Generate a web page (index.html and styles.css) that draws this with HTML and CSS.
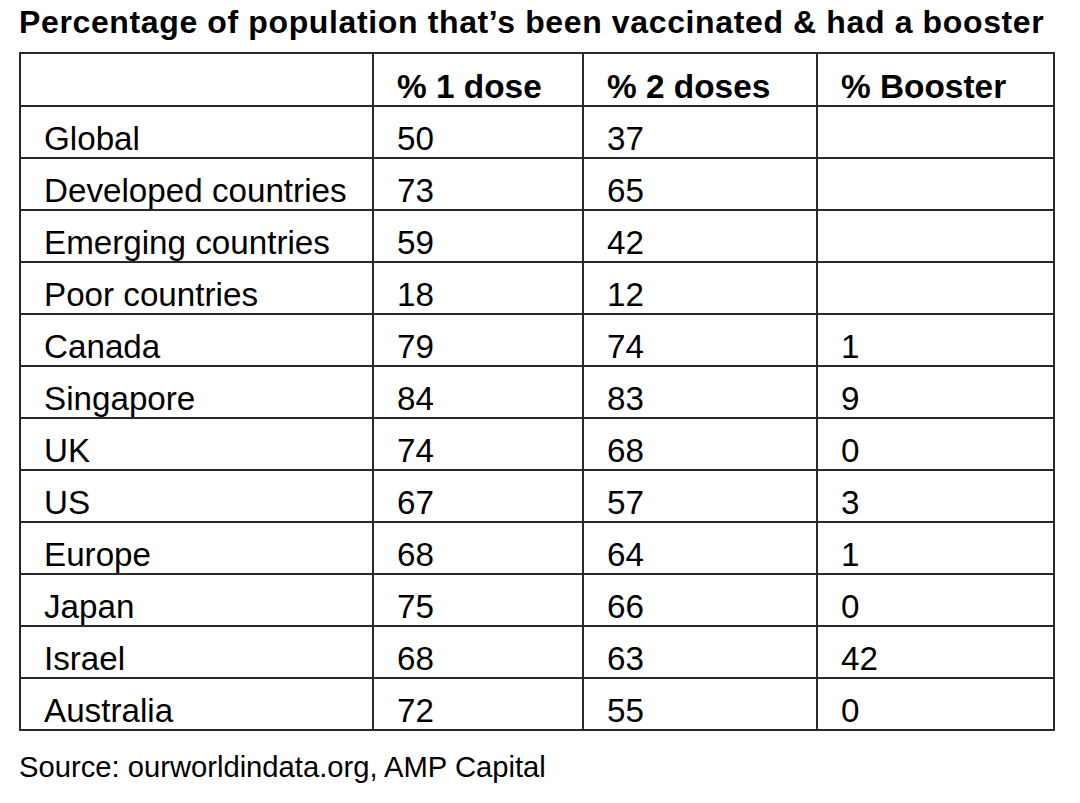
FILE: index.html
```html
<!DOCTYPE html>
<html>
<head>
<meta charset="utf-8">
<link rel="stylesheet" href="styles.css">
</head>
<body>
<div class="page">
  <h1 class="title">Percentage of population that’s been vaccinated &amp; had a booster</h1>
  <table class="data">
    <colgroup>
      <col class="c0"><col class="c1"><col class="c2"><col class="c3">
    </colgroup>
    <thead>
      <tr><th></th><th>% 1 dose</th><th>% 2 doses</th><th>% Booster</th></tr>
    </thead>
    <tbody>
      <tr><td>Global</td><td>50</td><td>37</td><td></td></tr>
      <tr><td>Developed countries</td><td>73</td><td>65</td><td></td></tr>
      <tr><td>Emerging countries</td><td>59</td><td>42</td><td></td></tr>
      <tr><td>Poor countries</td><td>18</td><td>12</td><td></td></tr>
      <tr><td>Canada</td><td>79</td><td>74</td><td>1</td></tr>
      <tr><td>Singapore</td><td>84</td><td>83</td><td>9</td></tr>
      <tr><td>UK</td><td>74</td><td>68</td><td>0</td></tr>
      <tr><td>US</td><td>67</td><td>57</td><td>3</td></tr>
      <tr><td>Europe</td><td>68</td><td>64</td><td>1</td></tr>
      <tr><td>Japan</td><td>75</td><td>66</td><td>0</td></tr>
      <tr><td>Israel</td><td>68</td><td>63</td><td>42</td></tr>
      <tr><td>Australia</td><td>72</td><td>55</td><td>0</td></tr>
    </tbody>
  </table>
  <p class="source">Source: ourworldindata.org, AMP Capital</p>
</div>
</body>
</html>
```
FILE: styles.css
```css
html, body {
  margin: 0;
  padding: 0;
  background: #ffffff;
}
.page {
  padding: 4px 0 0 19px;
  font-family: "Liberation Sans", Arial, sans-serif;
  color: #000;
}
.title {
  margin: 0 0 11px 0;
  font-size: 32px;
  font-weight: bold;
  line-height: 37px;
  letter-spacing: 0.63px;
  white-space: nowrap;
}
.data {
  border-collapse: collapse;
  width: 1034px;
  table-layout: fixed;
  border: 2px solid #1a1a1a;
}
.c0 { width: 353px; }
.c1 { width: 210px; }
.c2 { width: 234px; }
.c3 { width: 237px; }
.data th,
.data td {
  border: 2px solid #2a2a2a;
  padding: 0 0 0 23px;
  height: 50px;
  text-align: left;
  vertical-align: bottom;
  font-size: 33.2px;
  line-height: 37px;
  white-space: nowrap;
}
.data th {
  font-weight: bold;
  font-size: 33.4px;
  height: 51px;
}
.data td {
  font-weight: normal;
}
.source {
  margin: 19px 0 0 0;
  font-size: 29.2px;
  line-height: 34px;
}
```
